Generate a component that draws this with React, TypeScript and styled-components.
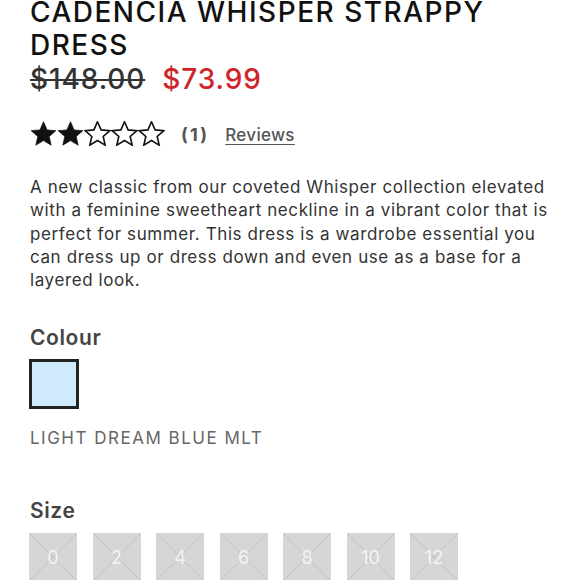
import React from "react";
import styled, { createGlobalStyle } from "styled-components";

const GlobalStyle = createGlobalStyle`
  html, body {
    margin: 0;
    padding: 0;
    background: #fff;
    overflow: hidden;
  }
  body {
    font-family: Inter, "Open Sans", sans-serif;
  }
`;

const Page = styled.div`
  width: 580px;
  height: 580px;
  overflow: hidden;
  padding: 0 30px;
  box-sizing: border-box;
`;

const Title = styled.h1`
  margin: -4px 0 0;
  font-size: 28px;
  line-height: 33px;
  font-weight: 500;
  letter-spacing: 1.5px;
  color: #111;
  text-transform: uppercase;
`;

const PriceRow = styled.div`
  display: flex;
  align-items: baseline;
  gap: 17px;
  font-size: 28px;
  line-height: 35px;
  font-weight: 500;
  letter-spacing: 0.9px;
`;

const OldPrice = styled.span`
  color: #333;
  text-decoration: line-through;
  text-decoration-thickness: 2px;
`;

const SalePrice = styled.span`
  color: #d0242b;
`;

const RatingRow = styled.div`
  display: flex;
  align-items: center;
  margin-top: 23px;
  height: 26px;
`;

const Stars = styled.div`
  display: flex;
`;

const Count = styled.span`
  margin: 3px 0 0 16px;
  font-size: 18px;
  font-weight: 700;
  color: #555;
  letter-spacing: 2.2px;
`;

const ReviewsLink = styled.a`
  margin: 3px 0 0 16px;
  font-size: 17px;
  font-weight: 500;
  color: #555;
  letter-spacing: 0.3px;
  text-decoration: underline;
  text-underline-offset: 3px;
`;

const Description = styled.p`
  margin: 30px 0 0;
  font-size: 17px;
  line-height: 23.3px;
  color: #333;
  letter-spacing: 0.6px;
`;

const SectionLabel = styled.h3<{ $top: number }>`
  margin: ${(p) => p.$top}px 0 0;
  font-size: 21px;
  line-height: 26px;
  font-weight: 600;
  color: #444;
  letter-spacing: 0.6px;
`;

const Swatch = styled.div<{ $color: string }>`
  width: 50px;
  height: 50px;
  box-sizing: border-box;
  margin: 8px 0 0 -1px;
  border: 3px solid #222;
  background: ${(p) => p.$color};
`;

const ColourName = styled.div`
  margin-top: 19px;
  font-size: 17px;
  letter-spacing: 1.5px;
  color: #666;
`;

const SizeGrid = styled.div`
  display: flex;
  gap: 15.5px;
  margin: 9px 0 0 -1px;
`;

const SizeBox = styled.div`
  position: relative;
  width: 48px;
  height: 48px;
  background: #d6d6d6;
  display: flex;
  align-items: center;
  justify-content: center;
  color: #f4f4f4;
  font-size: 18px;
  overflow: hidden;
`;

const Cross = styled.svg`
  position: absolute;
  inset: 0;
`;

const SizeText = styled.span`
  position: relative;
`;

function Star({ filled }: { filled: boolean }) {
  return (
    <svg width="27" height="25" viewBox="1.3 1.6 21.4 20.2">
      <path
        d="M12 2.2l2.9 6.6 7.1.6-5.4 4.7 1.6 7-6.2-3.7-6.2 3.7 1.6-7L2 9.4l7.1-.6z"
        fill={filled ? "#111" : "none"}
        stroke="#111"
        strokeWidth={filled ? 0.6 : 1.3}
        strokeLinejoin="miter"
      />
    </svg>
  );
}

const sizes = ["0", "2", "4", "6", "8", "10", "12"];

export default function App() {
  return (
    <>
      <GlobalStyle />
      <Page>
        <Title>Cadencia Whisper Strappy Dress</Title>
        <PriceRow>
          <OldPrice>$148.00</OldPrice>
          <SalePrice>$73.99</SalePrice>
        </PriceRow>
        <RatingRow>
          <Stars>
            {[1, 2, 3, 4, 5].map((i) => (
              <Star key={i} filled={i <= 2} />
            ))}
          </Stars>
          <Count>(1)</Count>
          <ReviewsLink href="#">Reviews</ReviewsLink>
        </RatingRow>
        <Description>
          A new classic from our coveted Whisper collection elevated with a feminine
          sweetheart neckline in a vibrant color that is perfect for summer. This dress
          is a wardrobe essential you can dress up or dress down and even use as a base
          for a layered look.
        </Description>
        <SectionLabel $top={33}>Colour</SectionLabel>
        <Swatch $color="#cfeafc" />
        <ColourName>LIGHT DREAM BLUE MLT</ColourName>
        <SectionLabel $top={50}>Size</SectionLabel>
        <SizeGrid>
          {sizes.map((s) => (
            <SizeBox key={s}>
              <Cross width="48" height="48" viewBox="0 0 48 48">
                <line x1="0" y1="0" x2="48" y2="48" stroke="#c2c2c2" strokeWidth="1" />
                <line x1="48" y1="0" x2="0" y2="48" stroke="#c2c2c2" strokeWidth="1" />
              </Cross>
              <SizeText>{s}</SizeText>
            </SizeBox>
          ))}
        </SizeGrid>
      </Page>
    </>
  );
}
